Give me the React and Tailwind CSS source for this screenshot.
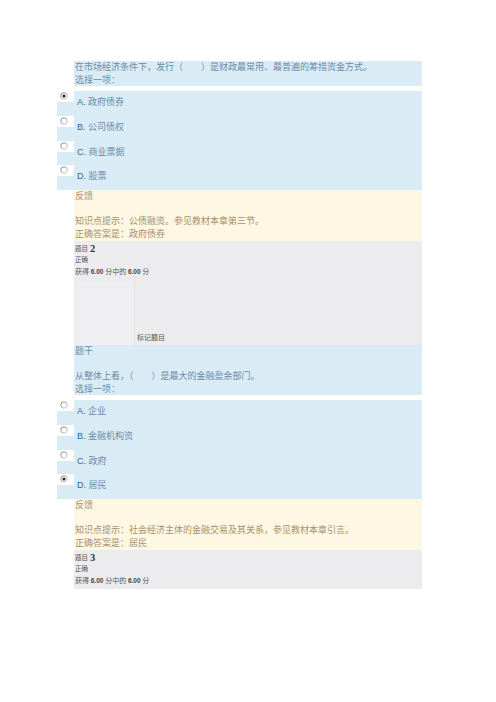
import React from "react";

const SERIF = "font-['Liberation_Serif','Noto_Sans_CJK_SC',serif]";
const SANS = "font-['Liberation_Sans','Noto_Sans_CJK_SC',sans-serif]";

function Radio({ checked, id }) {
  return (
    <svg width="8" height="8" viewBox="0 0 8 8" className="block">
      <defs>
        <linearGradient id={id} x1="0" y1="0" x2="1" y2="1">
          <stop offset="0" stopColor="#7a7a7a" />
          <stop offset="1" stopColor="#d6d6d6" />
        </linearGradient>
      </defs>
      <circle cx="4" cy="4" r="3.2" fill="#fff" stroke={`url(#${id})`} strokeWidth="1" />
      {checked && <circle cx="4" cy="4" r="1.5" fill="#222" />}
    </svg>
  );
}

function Options({ items, selected, pfx }) {
  return (
    <div className="w-[365px] h-[99px] bg-[#d9ecf6] flex flex-col">
      {items.map((t, i) => (
        <div key={i} className="h-[24.75px] flex items-start">
          <div className="w-[17px] h-[11px] bg-white flex items-start pl-[3px] pt-[1px]">
            <Radio checked={i === selected} id={`${pfx}${i}`} />
          </div>
          <div className={`pt-[5px] pl-[3px] text-[9px] leading-[12px] text-[#6a8ba6] ${SERIF}`}>
            <span className={`${SANS} text-[#2f6a9c]`}>{"ABCD"[i]}. </span>
            {t}
          </div>
        </div>
      ))}
    </div>
  );
}

function Feedback({ tip, answer }) {
  return (
    <div className={`ml-[17px] w-[348px] h-[51px] bg-[#fdf7e4] text-[9px] leading-[12.5px] text-[#a8916a] pl-[1px] ${SERIF}`}>
      <div>反馈</div>
      <div>&nbsp;</div>
      <div>{tip}</div>
      <div>{answer}</div>
    </div>
  );
}

function Info({ num, tall }) {
  return (
    <div className={`ml-[17px] w-[348px] bg-[#ececee] flex flex-col ${tall ? "h-[104px]" : "h-[39px]"}`}>
      <div className={`pl-[1px] pt-[2px] text-[6.5px] leading-[10px] text-[#555] ${SERIF}`}>
        <div className="flex items-end">
          <span>题目</span>
          <span className={`ml-[2px] text-[10.5px] leading-[11px] font-bold text-[#333] font-['Liberation_Serif',serif]`}>{num}</span>
        </div>
        <div className="leading-[11px]">正确</div>
        <div className="leading-[13px] text-[7px]">
          获得 <span className={`${SANS} font-bold text-[6.5px] text-[#444]`}>6.00</span> 分中的 <span className={`${SANS} font-bold text-[6.5px] text-[#444]`}>6.00</span> 分
        </div>
      </div>
      {tall && (
        <div className="flex-1 flex items-stretch mt-[2px]">
          <div className="w-[61px] bg-[#efeff1] border-r border-[#e2e2e4]" />
          <div className={`flex-1 flex items-end pl-[2px] pb-[2px] text-[7px] leading-[10px] text-[#555] ${SERIF}`}>标记题目</div>
        </div>
      )}
    </div>
  );
}

export default function App() {
  return (
    <div className="w-[496px] h-[702px] bg-white pt-[61px] pl-[57px]">
      <div className={`ml-[17px] w-[348px] h-[25px] bg-[#d9ecf6] text-[9px] leading-[12.5px] text-[#6a8ba6] pl-[1px] ${SERIF}`}>
        <div>在市场经济条件下，发行（　　）是财政最常用、最普遍的筹措资金方式。</div>
        <div>选择一项：</div>
      </div>
      <div className="h-[5px]" />
      <Options pfx="a" items={["政府债券", "公司债权", "商业票据", "股票"]} selected={0} />
      <Feedback tip="知识点提示：公债融资。参见教材本章第三节。" answer="正确答案是：政府债券" />
      <Info num="2" tall />
      <div className={`ml-[17px] w-[348px] h-[50px] bg-[#d9ecf6] text-[9px] leading-[12.5px] text-[#6a8ba6] pl-[1px] ${SERIF}`}>
        <div>题干</div>
        <div>&nbsp;</div>
        <div>从整体上看，（　　）是最大的金融盈余部门。</div>
        <div>选择一项：</div>
      </div>
      <div className="h-[5px]" />
      <Options pfx="b" items={["企业", "金融机构资", "政府", "居民"]} selected={3} />
      <Feedback tip="知识点提示：社会经济主体的金融交易及其关系，参见教材本章引言。" answer="正确答案是：居民" />
      <Info num="3" />
    </div>
  );
}
